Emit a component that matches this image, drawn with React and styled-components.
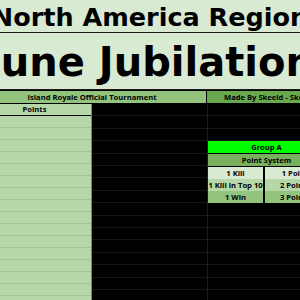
import React from "react";
import styled, { createGlobalStyle } from "styled-components";

const GlobalStyle = createGlobalStyle`
  html, body {
    margin: 0;
    padding: 0;
    background: #000;
    overflow: hidden;
  }
`;

const leftRows = Array.from({ length: 15 });
const pointRows = [
  { label: "1 Kill", value: "1 Point", bg: "#d9ead3" },
  { label: "1 Kill in Top 10", value: "2 Points", bg: "#b6d7a8" },
  { label: "1 Win", value: "3 Points", bg: "#93c47d" },
];

const App = () => {
  return (
    <Sheet>
      <GlobalStyle />
      <TitleRow size={25.5} height={33} shift={2}>
        North America Region
      </TitleRow>
      <TitleRow size={40} height={57} shift={1}>
        June Jubilation
      </TitleRow>
      <HeaderRow>
        <HeaderCell width={229} bg="#93c47d">
          Island Royale Official Tournament
        </HeaderCell>
        <HeaderCell width={130} bg="#6aa84f" indent={17}>
          Made By Skeeld - Skeeld#0001
        </HeaderCell>
      </HeaderRow>
      <Body>
        <PointsColumn>
          <PointsHead>Points</PointsHead>
          {leftRows.map((_, i) => (
            <PointsRow key={i} />
          ))}
        </PointsColumn>
        <BlackColumn width={115} />
        <GroupColumn>
          <GroupTable>
            <GroupTitle>Group A</GroupTitle>
            <SystemTitle>Point System</SystemTitle>
            {pointRows.map((row) => (
              <SystemRow key={row.label}>
                <SystemCell bg={row.bg} width={55}>
                  {row.label}
                </SystemCell>
                <SystemCell bg={row.bg} width={60}>
                  {row.value}
                </SystemCell>
              </SystemRow>
            ))}
          </GroupTable>
        </GroupColumn>
      </Body>
    </Sheet>
  );
};

const Sheet = styled.div`
  width: 300px;
  height: 300px;
  overflow: hidden;
  background: #000;
  font-family: "DejaVu Sans", "Open Sans", sans-serif;
  color: #000;
`;

const TitleRow = styled.div`
  height: ${(p) => p.height}px;
  box-sizing: border-box;
  padding-top: ${(p) => p.shift}px;
  background: #d9ead3;
  border-bottom: 1px solid #1a1a1a;
  display: flex;
  justify-content: center;
  align-items: center;
  font-size: ${(p) => p.size}px;
  font-weight: 700;
  white-space: nowrap;
  overflow: hidden;
`;

const HeaderRow = styled.div`
  display: flex;
  margin-left: -22px;
  height: 12px;
  border-top: 1px solid #000;
  border-bottom: 1px solid #000;
  background: #000;
`;

const HeaderCell = styled.div`
  flex: 0 0 ${(p) => p.width}px;
  box-sizing: border-box;
  padding-left: ${(p) => p.indent || 0}px;
  background: ${(p) => p.bg};
  border-right: 1px solid #000;
  font-family: "Open Sans", sans-serif;
  font-size: 7.6px;
  font-weight: 700;
  line-height: 12px;
  text-align: ${(p) => (p.indent ? "left" : "center")};
  white-space: nowrap;
  overflow: hidden;
`;

const Body = styled.div`
  display: flex;
  margin-left: -22px;
  height: 200px;
`;

const PointsColumn = styled.div`
  flex: 0 0 113px;
  display: flex;
  flex-direction: column;
  border-right: 1px solid #6f8f62;
  background: #b6d7a8;
`;

const PointsHead = styled.div`
  height: 11px;
  line-height: 11px;
  border-bottom: 1px solid #000;
  text-align: center;
  font-family: "Open Sans", sans-serif;
  font-size: 7.6px;
  font-weight: 700;
`;

const PointsRow = styled.div`
  flex: 0 0 12px;
  box-sizing: border-box;
  border-bottom: 1px solid #a3c596;
`;

const BlackColumn = styled.div`
  flex: 0 0 ${(p) => p.width}px;
  border-right: 1px solid #1c1c1c;
  background: repeating-linear-gradient(
    to bottom,
    #000 0,
    #000 11.4px,
    #161616 11.4px,
    #161616 12.4px
  );
`;

const GroupColumn = styled.div`
  flex: 1;
  padding-top: 37px;
  background: repeating-linear-gradient(
    to bottom,
    #000 0,
    #000 11.4px,
    #161616 11.4px,
    #161616 12.4px
  );
`;

const GroupTable = styled.div`
  width: 117px;
  background: #000;
  font-family: "Open Sans", sans-serif;
  font-size: 7.6px;
  font-weight: 700;
  text-align: center;
  white-space: nowrap;
`;

const GroupTitle = styled.div`
  height: 12px;
  line-height: 12px;
  background: #00ff00;
  border-bottom: 1px solid #000;
`;

const SystemTitle = styled.div`
  height: 12px;
  line-height: 12px;
  background: #79b05e;
  border-bottom: 1px solid #000;
`;

const SystemRow = styled.div`
  display: flex;
  gap: 2px;
  height: 12px;
`;

const SystemCell = styled.div`
  flex: 0 0 ${(p) => p.width}px;
  background: ${(p) => p.bg};
  line-height: 12px;
  overflow: hidden;
`;

export default App;
